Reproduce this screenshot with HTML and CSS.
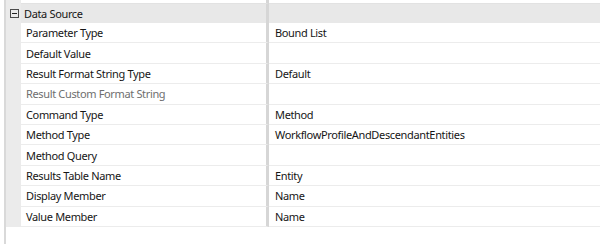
FILE: index.html
```html
<!DOCTYPE html>
<html lang="en">
<head>
  <meta charset="UTF-8">
  <meta name="viewport" content="width=device-width, initial-scale=1.0">
  <title>Data Source Properties</title>
  <link rel="stylesheet" href="styles.css">
</head>
<body>
  <div class="sheet">
    <!-- end of the category above -->
    <div class="row spacer">
      <div class="gutter"></div>
      <div class="label"></div>
      <div class="value"></div>
    </div>

    <!-- Data Source -->
    <div class="row category">
      <div class="gutter">
        <svg class="toggle" width="9" height="9" viewBox="0 0 9 9">
          <rect x="0.5" y="0.5" width="8" height="8" fill="none" stroke="#4a4a4a"/>
          <line x1="2" y1="4.5" x2="7" y2="4.5" stroke="#222"/>
        </svg>
      </div>
      <div class="label">Data Source</div>
      <div class="value"></div>
    </div>

    <div class="row">
      <div class="gutter"></div>
      <div class="label">Parameter Type</div>
      <div class="value">Bound List</div>
    </div>
    <div class="row">
      <div class="gutter"></div>
      <div class="label">Default Value</div>
      <div class="value"></div>
    </div>
    <div class="row">
      <div class="gutter"></div>
      <div class="label">Result Format String Type</div>
      <div class="value">Default</div>
    </div>
    <div class="row">
      <div class="gutter"></div>
      <div class="label disabled">Result Custom Format String</div>
      <div class="value"></div>
    </div>
    <div class="row">
      <div class="gutter"></div>
      <div class="label">Command Type</div>
      <div class="value">Method</div>
    </div>
    <div class="row">
      <div class="gutter"></div>
      <div class="label">Method Type</div>
      <div class="value">WorkflowProfileAndDescendantEntities</div>
    </div>
    <div class="row">
      <div class="gutter"></div>
      <div class="label">Method Query</div>
      <div class="value"></div>
    </div>
    <div class="row">
      <div class="gutter"></div>
      <div class="label">Results Table Name</div>
      <div class="value">Entity</div>
    </div>
    <div class="row">
      <div class="gutter"></div>
      <div class="label">Display Member</div>
      <div class="value">Name</div>
    </div>
    <div class="row">
      <div class="gutter"></div>
      <div class="label">Value Member</div>
      <div class="value">Name</div>
    </div>
  </div>
</body>
</html>
```

FILE: styles.css
```css
/* page */
body {
  margin: 0;
  background-color: #ffffff;
  color: #161616;
  font-family: "Noto Sans", "Open Sans", sans-serif;
  font-size: 11px;
  letter-spacing: -0.35px;
}

/* property grid */
.sheet {
  margin-left: 4px;
  border-left: 2px solid #d9d9d9;
  height: 100vh;
  box-sizing: border-box;
}

.row {
  display: grid;
  grid-template-columns: 15px 248px 1fr;
  height: 20.4px;
}

.gutter {
  background-color: #ebebeb;
  display: flex;
  align-items: center;
  justify-content: center;
}

.label,
.value {
  display: flex;
  align-items: center;
  white-space: nowrap;
  overflow: hidden;
  border-bottom: 1px solid #ececec;
}

.label {
  padding-left: 5px;
  border-right: 3px solid #d6d6d6;
}

.value {
  padding-left: 6px;
}

.label.disabled {
  color: #6e6e6e;
}

/* header + leftover of previous category */
.row.spacer {
  height: 4px;
}
.row.spacer .label,
.row.spacer .value {
  border-bottom-color: #e2e2e2;
}

.row.category {
  height: 19px;
  background-color: #e8e8e8;
}
.row.category .label,
.row.category .value {
  border-bottom: none;
}
.row.category .label {
  padding-left: 3px;
}

.toggle {
  display: block;
  margin-left: 2px;
}
```
